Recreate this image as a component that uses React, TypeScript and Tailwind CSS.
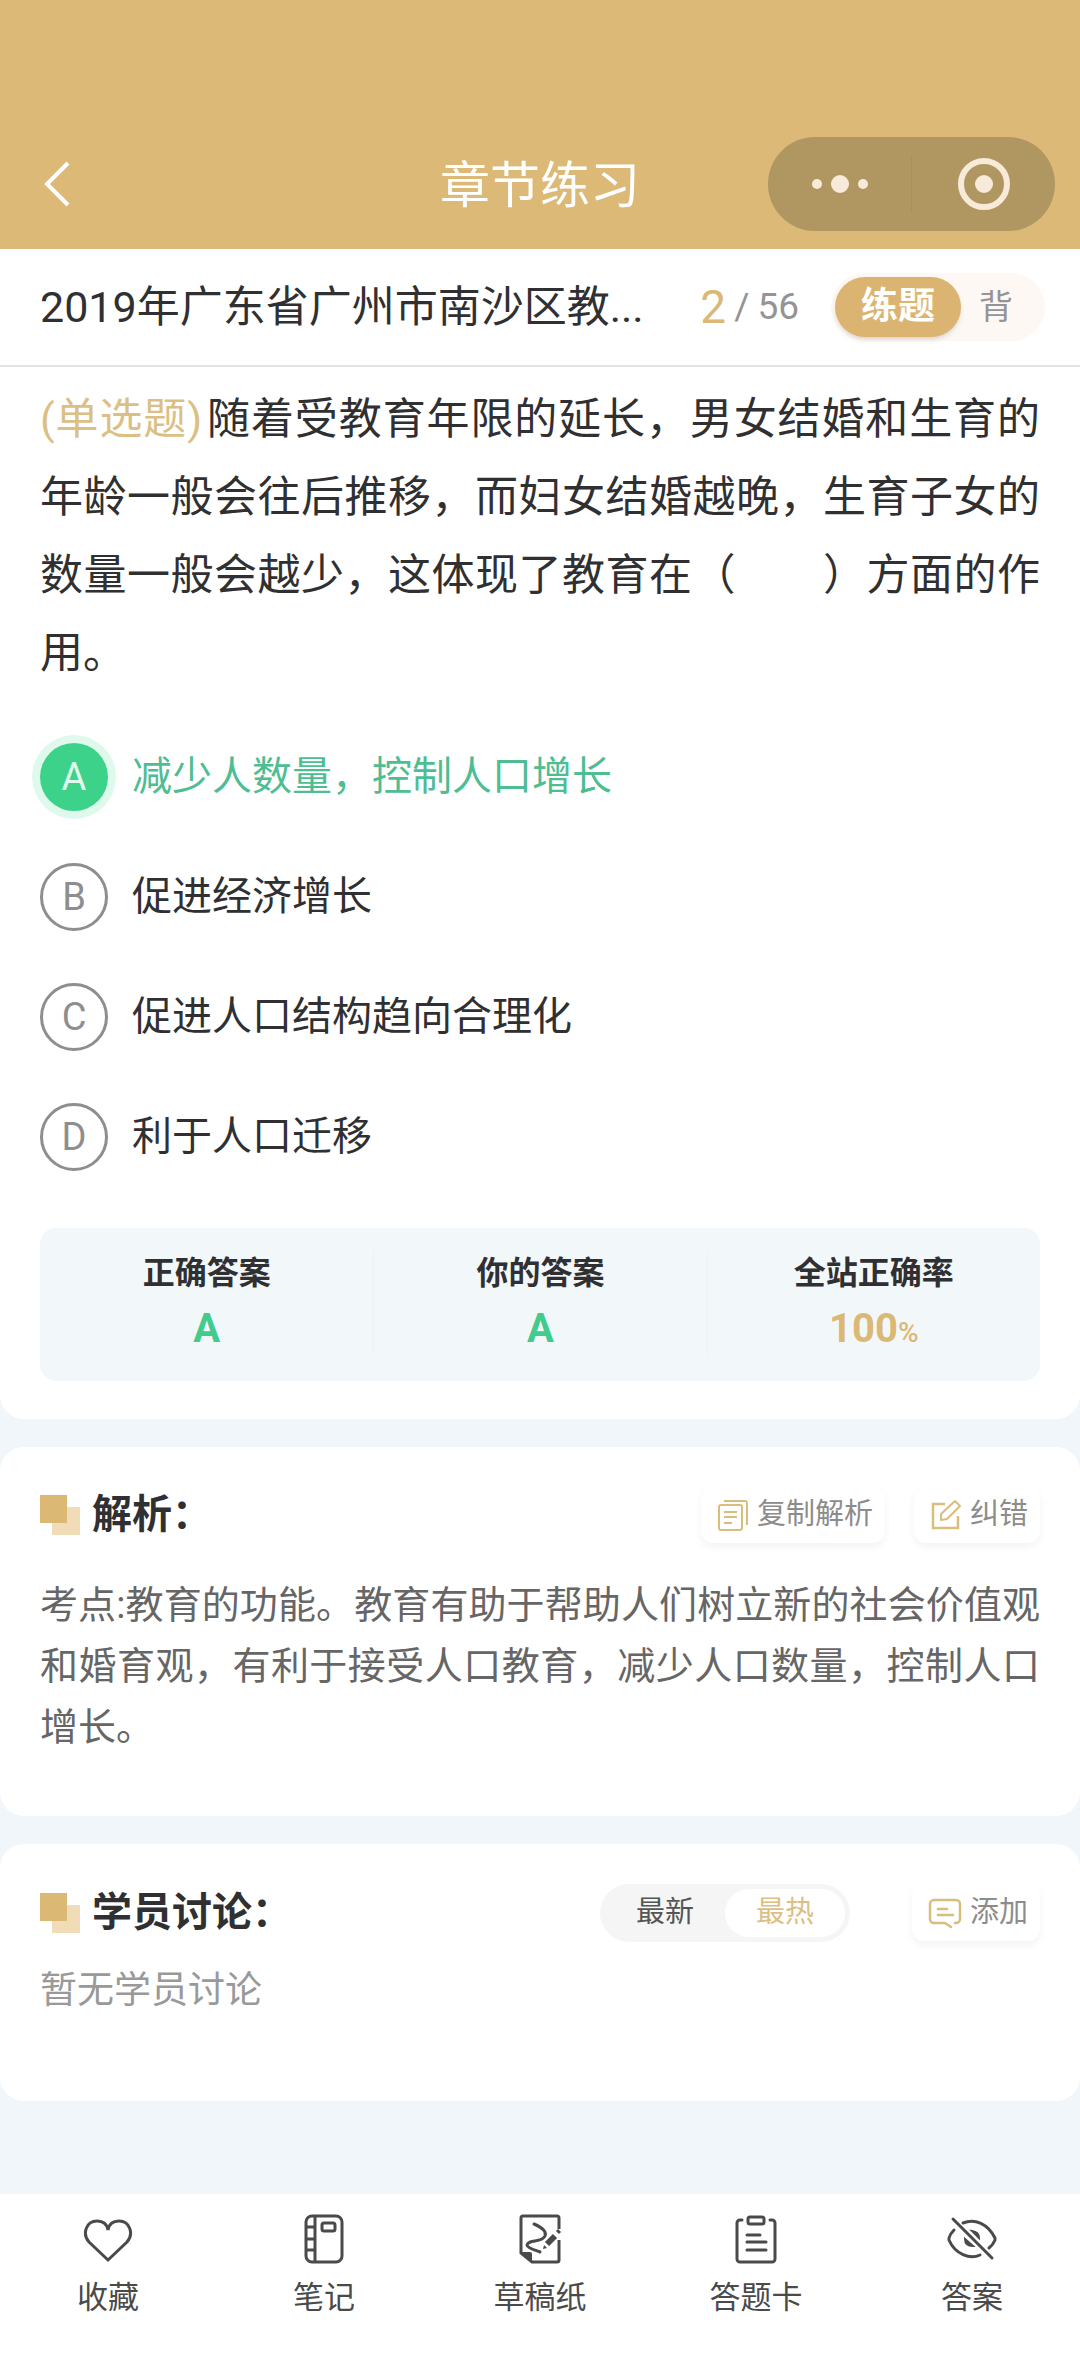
import { useState } from "react";
import type { ReactNode } from "react";

const options = [
  { key: "A", text: "减少人数量，控制人口增长" },
  { key: "B", text: "促进经济增长" },
  { key: "C", text: "促进人口结构趋向合理化" },
  { key: "D", text: "利于人口迁移" },
];

const CopyIcon = () => (
  <svg width="32" height="32" viewBox="0 0 32 32" fill="none" stroke="currentColor" strokeWidth="2">
    <rect x="2" y="6" width="23" height="25" rx="2" />
    <path d="M7 2h21a2 2 0 0 1 2 2v22M7 13h13M7 18h13M7 24h8" />
  </svg>
);

const EditIcon = () => (
  <svg width="32" height="32" viewBox="0 0 32 32" fill="none" stroke="currentColor" strokeWidth="2.5">
    <path d="M15 5H3v24h25V17" />
    <path d="M11 21v-6L25 2l5 5-13 13z" strokeWidth="2" strokeLinejoin="round" />
  </svg>
);

const CommentIcon = () => (
  <svg
    width="34"
    height="32"
    viewBox="0 0 34 32"
    fill="none"
    stroke="currentColor"
    strokeWidth="2.5"
    strokeLinecap="round"
    strokeLinejoin="round"
  >
    <path d="M27 26h1a4 4 0 0 0 4-4V7a4 4 0 0 0-4-4H6a4 4 0 0 0-4 4v15a4 4 0 0 0 4 4h11l6 4M10 12h9M10 18h15" />
  </svg>
);

const HeartIcon = () => (
  <svg width="50" height="50" viewBox="0 0 50 50" fill="none" stroke="currentColor" strokeWidth="3">
    <path d="M25 46 6 28C-1 20 3 7 14 7c6 0 10 3 11 9 1-6 5-9 11-9 11 0 15 13 8 21z" />
  </svg>
);

const NoteIcon = () => (
  <svg width="50" height="50" viewBox="0 0 50 50" fill="none" stroke="currentColor" strokeWidth="3">
    <rect x="7" y="2" width="36" height="46" rx="6" />
    <path d="M16 2v46M7 13h9M7 25h9M7 36h9" />
    <rect x="23" y="9" width="13" height="8" rx="2" />
  </svg>
);

const DraftIcon = () => (
  <svg width="50" height="50" viewBox="0 0 50 50" fill="none" stroke="currentColor" strokeWidth="3">
    <path d="M44 15V4a2 2 0 0 0-2-2H8a2 2 0 0 0-2 2v35l11 9h25a2 2 0 0 0 2-2V26" />
    <path d="M6 38h9q2 0 2 2v8z" fill="currentColor" stroke="none" />
    <path d="M19 10c7 3 13 7 11 12-3 7-17 3-18 9 0 3 8 5 13 7" strokeLinecap="round" />
    <path d="m32 30 8-8" strokeWidth="6" />
    <path d="m42 16 3 3" />
    <path d="m28 35 1-4 3 3z" fill="currentColor" stroke="none" />
  </svg>
);

const SheetIcon = () => (
  <svg
    width="50"
    height="50"
    viewBox="0 0 50 50"
    fill="none"
    stroke="currentColor"
    strokeWidth="3"
    strokeLinecap="round"
  >
    <path d="M11 6H9a3 3 0 0 0-3 3v36a3 3 0 0 0 3 3h32a3 3 0 0 0 3-3V9a3 3 0 0 0-3-3h-2M16 21h13M16 28h19M16 36h19" />
    <rect x="17" y="3" width="16" height="7" rx="2" />
  </svg>
);

const EyeOffIcon = () => (
  <svg
    width="52"
    height="50"
    viewBox="0 0 52 50"
    fill="none"
    stroke="currentColor"
    strokeWidth="3"
    strokeLinecap="round"
  >
    <path d="m7 5 39 39M17 9c12-5 25 1 32 15v2q-2 5-6 8M8 16q-4 4-5 8v2c6 14 21 20 31 15" />
    <path d="M26 17q7 1 7 7zM19 25q0 7 8 7z" fill="currentColor" strokeWidth="2" />
  </svg>
);

const tabs = [
  { label: "收藏", icon: <HeartIcon /> },
  { label: "笔记", icon: <NoteIcon /> },
  { label: "草稿纸", icon: <DraftIcon /> },
  { label: "答题卡", icon: <SheetIcon /> },
  { label: "答案", icon: <EyeOffIcon /> },
];

// 卡片标题：两个重叠的小方块 + 文字
const SectionTitle = ({ children }: { children: ReactNode }) => (
  <h2 className="flex items-center gap-3 text-[40px] leading-[56px] font-bold text-[#303032]">
    <svg width="40" height="40" viewBox="0 0 40 40">
      <rect x="12" y="12" width="28" height="28" fill="#f1dcb8" />
      <rect width="27" height="28" fill="#dcb875" />
    </svg>
    {children}
  </h2>
);

const SmallButton = ({ icon, children }: { icon: ReactNode; children: ReactNode }) => (
  <button className="flex h-[56px] items-center gap-2 rounded-xl bg-white pr-3 pl-4 text-[29px] text-[#8c8c8c] shadow-[0_4px_8px_rgba(0,0,0,0.05)]">
    <span className="text-[#d9bd7c]">{icon}</span>
    {children}
  </button>
);

const App = () => {
  const [selected, setSelected] = useState("A");
  const [mode, setMode] = useState("练题");
  const [sort, setSort] = useState("最热");

  return (
    <div className="flex min-h-screen flex-col bg-[#f1f6fa] font-[Roboto,'Noto_Sans_CJK_SC',sans-serif] text-[#303032]">
      <header className="grid grid-cols-3 items-center bg-[#dcb977] px-[25px] pt-[137px] pb-[18px] text-white">
        <button aria-label="返回" className="w-12 pl-4">
          <svg width="32" height="48" viewBox="0 0 32 48" fill="none" stroke="currentColor" strokeWidth="4">
            <path d="M27 3 6 24l21 21" />
          </svg>
        </button>
        <h1 className="pt-1 text-center text-[50px] leading-[72px]">章节练习</h1>
        <div className="flex h-[94px] w-[287px] items-center justify-self-end rounded-full bg-[#b09660] text-[#f8ead9]">
          <button aria-label="更多" className="flex flex-1 justify-center border-r border-[#a98f5b] py-4">
            <svg width="60" height="24" viewBox="0 0 60 24" fill="currentColor">
              <circle cx="7" cy="12" r="5" />
              <circle cx="30" cy="12" r="9" />
              <circle cx="53" cy="12" r="5" />
            </svg>
          </button>
          <button aria-label="关闭" className="flex flex-1 justify-center">
            <svg width="54" height="54" viewBox="0 0 54 54" fill="none" stroke="currentColor" strokeWidth="6">
              <circle cx="27" cy="27" r="23" />
              <circle cx="27" cy="27" r="9" fill="currentColor" stroke="none" />
            </svg>
          </button>
        </div>
      </header>

      <main>
        <section className="rounded-b-3xl bg-white pb-[38px]">
          <div className="flex h-[118px] items-center border-b-2 border-[#e2e2e4] pr-[35px] pl-10">
            <p className="text-[43px] leading-[60px] whitespace-nowrap">2019年广东省广州市南沙区教...</p>
            <div className="ml-auto flex items-center gap-2 text-[37px] leading-[60px] text-[#949496]">
              <span className="text-[46px] text-[#dcb875]">2</span>
              <span>/</span>
              <span>56</span>
            </div>
            <div className="ml-8 flex rounded-full bg-[#fdf8f3] p-1">
              {["练题", "背"].map((item) => (
                <button
                  key={item}
                  onClick={() => setMode(item)}
                  className={
                    mode === item
                      ? "h-[60px] rounded-full bg-[#dcb472] px-[26px] text-[37px] font-bold text-white shadow-md"
                      : "h-[60px] pr-7 pl-[18px] text-[34px] text-[#949496]"
                  }
                >
                  {item}
                </button>
              ))}
            </div>
          </div>

          <div className="px-10 pt-[13px]">
            <p className="text-justify text-[43px] leading-[78px]">
              <span className="mr-1 text-[#dcbf85]">(单选题)</span>
              随着受教育年限的延长，男女结婚和生育的年龄一般会往后推移，而妇女结婚越晚，生育子女的数量一般会越少，这体现了教育在（&#12288;&#12288;）方面的作用。
            </p>

            <div className="mt-[51px] flex flex-col gap-[52px]">
              {options.map((o) => (
                <label key={o.key} className="flex items-center gap-6 text-[40px] leading-[68px]">
                  <input
                    type="radio"
                    name="answer"
                    className="sr-only"
                    checked={selected === o.key}
                    onChange={() => setSelected(o.key)}
                  />
                  <span
                    className={
                      selected === o.key
                        ? "flex size-[68px] items-center justify-center rounded-full bg-[#3dd28a] text-[38px] text-[#e0fbee] ring-8 ring-[#e0f9ed]"
                        : "flex size-[68px] items-center justify-center rounded-full border-[3px] border-[#8e8e90] text-[38px] text-[#8e8e90]"
                    }
                  >
                    {o.key}
                  </span>
                  <span className={selected === o.key ? "text-[#4fbd92]" : ""}>{o.text}</span>
                </label>
              ))}
            </div>

            <dl className="mt-[57px] grid grid-cols-3 rounded-2xl bg-[#f2f7fa] pt-[22px] pb-[25px] text-center">
              <div>
                <dt className="text-[32px] leading-[46px] font-bold">正确答案</dt>
                <dd className="mt-[6px] text-[40px] leading-[54px] font-bold text-[#43cb8d]">A</dd>
              </div>
              <div className="border-l border-[#edf2f6]">
                <dt className="text-[32px] leading-[46px] font-bold">你的答案</dt>
                <dd className="mt-[6px] text-[40px] leading-[54px] font-bold text-[#43cb8d]">{selected}</dd>
              </div>
              <div className="border-l border-[#edf2f6]">
                <dt className="text-[32px] leading-[46px] font-bold">全站正确率</dt>
                <dd className="mt-[6px] text-[40px] leading-[54px] font-bold text-[#dcb875]">
                  100<span className="text-[28px] leading-none font-medium">%</span>
                </dd>
              </div>
            </dl>
          </div>
        </section>

        <section className="mt-7 rounded-3xl bg-white px-10 pt-10 pb-[58px]">
          <div className="flex items-center gap-[29px]">
            <SectionTitle>解析：</SectionTitle>
            <div className="ml-auto">
              <SmallButton icon={<CopyIcon />}>复制解析</SmallButton>
            </div>
            <SmallButton icon={<EditIcon />}>纠错</SmallButton>
          </div>
          <p className="mt-8 text-justify text-[38px] leading-[61px] text-[#666]">
            考点:教育的功能。教育有助于帮助人们树立新的社会价值观和婚育观，有利于接受人口教育，减少人口数量，控制人口增长。
          </p>
        </section>

        <section className="mt-7 rounded-3xl bg-white px-10 pt-10 pb-[82px]">
          <div className="flex items-center gap-[62px]">
            <SectionTitle>学员讨论：</SectionTitle>
            <div className="ml-auto flex rounded-full bg-[#f5f5f5] p-[5px] text-[29px]">
              {["最新", "最热"].map((item) => (
                <button
                  key={item}
                  onClick={() => setSort(item)}
                  className={
                    sort === item
                      ? "h-12 w-[120px] rounded-full bg-white text-[#dcbf85]"
                      : "h-12 w-[120px] text-[#555]"
                  }
                >
                  {item}
                </button>
              ))}
            </div>
            <SmallButton icon={<CommentIcon />}>添加</SmallButton>
          </div>
          <p className="mt-[21px] text-[37px] leading-[56px] text-[#999]">暂无学员讨论</p>
        </section>
      </main>

      <nav className="mt-auto grid grid-cols-5 bg-white pt-5 pb-14 text-[#4a4a4a]">
        {tabs.map((t) => (
          <button key={t.label} className="flex flex-col items-center gap-3 text-[31px] leading-[44px]">
            {t.icon}
            {t.label}
          </button>
        ))}
      </nav>
    </div>
  );
};

export default App;
